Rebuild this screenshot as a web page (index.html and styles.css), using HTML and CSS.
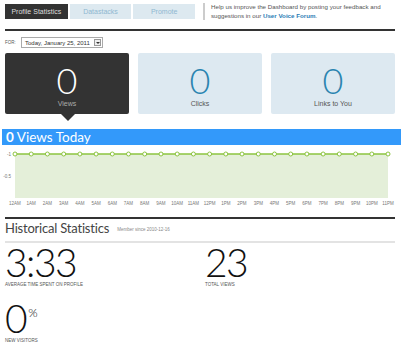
FILE: index.html
```html
<!DOCTYPE html>
<html lang="en">
<head>
    <meta charset="UTF-8">
    <title>Profile Statistics</title>
    <link rel="stylesheet" href="styles.css">
</head>
<body>
    <div class="page">
        <div class="header">
            <div class="tabs">
                <div class="tab active">Profile Statistics</div>
                <div class="tab">Datastacks</div>
                <div class="tab">Promote</div>
            </div>
            <div class="notice">
                Help us improve the Dashboard by posting your feedback and
                suggestions in our <a href="#">User Voice Forum</a>.
            </div>
        </div>

        <div class="rule"></div>

        <div class="for-row">
            <span class="for-label">FOR:</span>
            <div class="date-select">
                <span>Today, January 25, 2011</span>
                <span class="arrow"></span>
            </div>
        </div>

        <div class="cards">
            <div class="card active">
                <div class="card-num">0</div>
                <div class="card-label">Views</div>
            </div>
            <div class="card">
                <div class="card-num">0</div>
                <div class="card-label">Clicks</div>
            </div>
            <div class="card">
                <div class="card-num">0</div>
                <div class="card-label">Links to You</div>
            </div>
        </div>
    </div>

    <div class="today-bar"><b>0</b> Views Today</div>

    <div class="page">
        <svg class="chart" width="401" height="60" viewBox="0 0 401 60">
            <rect x="15" y="5" width="373" height="44" fill="#e4efd9"/>
            <text x="11" y="7" class="axis" text-anchor="end">-1</text>
            <text x="11" y="29" class="axis" text-anchor="end">-0.5</text>
            <g id="series"></g>
        </svg>

        <div class="rule second"></div>

        <div class="hist-title">
            Historical Statistics <span class="since">Member since 2010-12-16</span>
        </div>
        <div class="thin-rule"></div>

        <div class="stats">
            <div class="stat">
                <div class="stat-num">3:33</div>
                <div class="stat-label">AVERAGE TIME SPENT ON PROFILE</div>
            </div>
            <div class="stat">
                <div class="stat-num">23</div>
                <div class="stat-label">TOTAL VIEWS</div>
            </div>
            <div class="stat">
                <div class="stat-num">0<sup>%</sup></div>
                <div class="stat-label">NEW VISITORS</div>
            </div>
        </div>
    </div>

    <script>
        // Build hourly points and labels
        const hours = ['12AM','1AM','2AM','3AM','4AM','5AM','6AM','7AM','8AM','9AM','10AM','11AM',
                       '12PM','1PM','2PM','3PM','4PM','5PM','6PM','7PM','8PM','9PM','10PM','11PM'];
        const g = document.getElementById('series');
        const step = 373 / 23;
        let svg = '<line x1="15" y1="5" x2="388" y2="5" stroke="#8cc43f" stroke-width="1.5"/>';
        hours.forEach((h, i) => {
            const x = (15 + i * step).toFixed(1);
            svg += '<circle cx="' + x + '" cy="5" r="2" fill="#fff" stroke="#8cc43f" stroke-width="1"/>';
            svg += '<text x="' + x + '" y="56" class="axis" text-anchor="middle">' + h + '</text>';
        });
        g.innerHTML = svg;
    </script>
</body>
</html>
```

FILE: styles.css
```css
body {
    margin: 0;
    font-family: "Liberation Sans", Arial, sans-serif;
    color: #444;
    background: #fff;
}

.page {
    padding: 0 6px 0 5px;
}

.header {
    display: flex;
    padding-top: 4px;
    height: 19px;
}

.tabs {
    display: flex;
    gap: 2px;
    width: 190px;
}

.tab {
    width: 62px;
    height: 15px;
    line-height: 15px;
    text-align: center;
    font-size: 7px;
    color: #8fb8d0;
    background-color: #dde9f0;
}

.tab.active {
    width: 63px;
    background-color: #333;
    color: #ddd;
}

.notice {
    margin-left: 8px;
    padding-left: 6px;
    border-left: 2px solid #ccc;
    font-size: 6.2px;
    line-height: 8.5px;
    color: #555;
    height: 17px;
    margin-top: -1px;
}

.notice a {
    color: #2b7db5;
    font-weight: bold;
    text-decoration: none;
}

.rule {
    margin-top: 6px;
    border-top: 2px solid #333;
}

.for-row {
    display: flex;
    align-items: center;
    margin-top: 6px;
    height: 11px;
}

.for-label {
    font-size: 4.5px;
    color: #555;
    width: 16px;
}

.date-select {
    display: flex;
    align-items: center;
    gap: 4px;
    height: 9px;
    padding-left: 3px;
    border: 1px solid #aaa;
    font-size: 6px;
    color: #333;
}

.date-select .arrow {
    width: 7px;
    height: 7px;
    margin-right: 1px;
    border: 1px solid #999;
    background: #eee;
    box-sizing: border-box;
    position: relative;
}

.date-select .arrow::after {
    content: "";
    position: absolute;
    left: 1px;
    top: 2px;
    border-left: 2px solid transparent;
    border-right: 2px solid transparent;
    border-top: 2px solid #333;
}

.cards {
    display: grid;
    grid-template-columns: 124px 124px 124px;
    gap: 9px;
    margin-top: 5px;
}

.card {
    position: relative;
    height: 61px;
    background-color: #dde9f1;
    border-radius: 2px;
    text-align: center;
    color: #2a84b0;
}

.card.active {
    background-color: #333;
    color: #fff;
}

.card.active::after {
    content: "";
    position: absolute;
    left: 56px;
    top: 61px;
    border-left: 7px solid transparent;
    border-right: 7px solid transparent;
    border-top: 7px solid #333;
}

.card-num {
    font-family: Lato, "Open Sans", sans-serif;
    font-weight: 300;
    font-size: 36px;
    line-height: 36px;
    padding-top: 9px;
}

.card-label {
    font-size: 7px;
    color: #555;
    margin-top: 2px;
}

.card.active .card-label {
    color: #aaa;
}

.today-bar {
    margin: 15px 0 0 2px;
    height: 16px;
    line-height: 16px;
    padding-left: 4px;
    background-color: #3399fa;
    color: #fff;
    font-family: Lato, "Open Sans", sans-serif;
    font-size: 13.5px;
}

.chart {
    display: block;
    margin: 4px 0 0 -5px;
}

.chart .axis {
    font-family: "Liberation Sans", Arial, sans-serif;
    font-size: 4.5px;
    fill: #777;
}

.rule.second {
    margin-top: 8px;
}

.hist-title {
    margin-top: 2px;
    font-family: Lato, "Open Sans", sans-serif;
    font-size: 13px;
    letter-spacing: -0.2px;
    color: #444;
    line-height: 14px;
}

.since {
    font-family: "Liberation Sans", Arial, sans-serif;
    font-size: 4.5px;
    letter-spacing: 0;
    color: #888;
    margin-left: 5px;
    vertical-align: middle;
}

.thin-rule {
    margin-top: 4px;
    border-top: 2px solid #e3e3e3;
}

.stats {
    display: grid;
    grid-template-columns: 200px 190px;
    row-gap: 13px;
    margin-top: 2px;
}

.stat-num {
    font-family: Lato, "Open Sans", sans-serif;
    font-weight: 300;
    font-size: 39px;
    line-height: 34px;
    color: #111;
    letter-spacing: -1.5px;
}

.stat-num sup {
    font-size: 12px;
    line-height: 0;
    vertical-align: 16px;
    margin-left: 2px;
    letter-spacing: 0;
}

.stat-label {
    font-size: 4.5px;
    line-height: 6px;
    color: #555;
    margin-top: 3px;
}
```
